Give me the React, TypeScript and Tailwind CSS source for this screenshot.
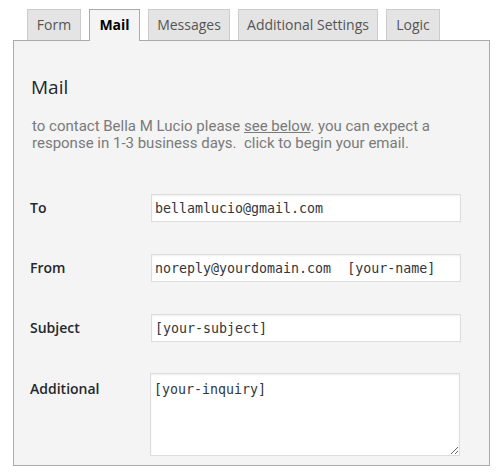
const tabs = [
  { label: 'Form', w: 'w-[54px]' },
  { label: 'Mail', w: 'w-[51px]', active: true },
  { label: 'Messages', w: 'w-[82px]' },
  { label: 'Additional Settings', w: 'w-[140px]' },
  { label: 'Logic', w: 'w-[54px]' },
];

const fieldClass =
  "w-[310px] border border-[#dddddd] bg-white px-[3px] text-[13.3px] text-[#32373c] font-['DejaVu_Sans_Mono',monospace] shadow-[inset_0_1px_2px_rgba(0,0,0,0.07)] outline-none";

const Row = ({ label, value }: { label: string; value: string }) => (
  <div className="flex items-start">
    <label className="w-[121px] shrink-0 text-[14px] font-semibold leading-[28px] text-[#23282d]">{label}</label>
    <input readOnly defaultValue={value} className={`${fieldClass} h-[28px] leading-[26px]`} />
  </div>
);

export default function App() {
  return (
    <div className="h-[475px] w-[502px] bg-white font-['Open_Sans',sans-serif]">
      <div className="flex items-end gap-[8px] pl-[27px] pt-[9px]">
        {tabs.map((t) =>
          t.active ? (
            <div
              key={t.label}
              className={`${t.w} relative z-10 -mb-px h-[32px] border border-b-0 border-[#aaaaaa] bg-[#f4f4f4] pb-[1px] text-center text-[14px] font-bold leading-[29px] text-black`}
            >
              {t.label}
            </div>
          ) : (
            <div
              key={t.label}
              className={`${t.w} h-[31px] border border-b-0 border-[#cccccc] bg-[#e4e4e4] text-center text-[14px] leading-[29px] text-[#555555]`}
            >
              {t.label}
            </div>
          )
        )}
      </div>
      <div className="ml-[13px] h-[426px] w-[477px] border border-[#aaaaaa] bg-[#f4f4f4] pl-[16px] pt-[34px]">
        <h2 className="ml-[1px] text-[19px] font-normal leading-[24px] text-[#23282d]">Mail</h2>
        <p className="ml-[2px] mt-[19px] font-['Roboto',sans-serif] text-[15px] leading-[17px] text-[#7a7a7a]">
          to contact Bella M Lucio please <span className="underline">see below</span>. you can expect a
          <br />
          response in 1-3 business days.&nbsp; click to begin your email.
        </p>
        <div className="mt-[42px] flex flex-col gap-[32px]">
          <Row label="To" value="bellamlucio@gmail.com" />
          <Row label="From" value="noreply@yourdomain.com  [your-name]" />
          <Row label="Subject" value="[your-subject]" />
        </div>
        <div className="mt-[31px] flex items-start">
          <label className="w-[120px] shrink-0 pt-[2px] text-[14px] font-semibold leading-[28px] text-[#23282d]">
            Additional
          </label>
          <textarea
            readOnly
            defaultValue="[your-inquiry]"
            className={`${fieldClass} block h-[83px] resize-y pt-[6px] leading-[20px]`}
          />
        </div>
      </div>
    </div>
  );
}
